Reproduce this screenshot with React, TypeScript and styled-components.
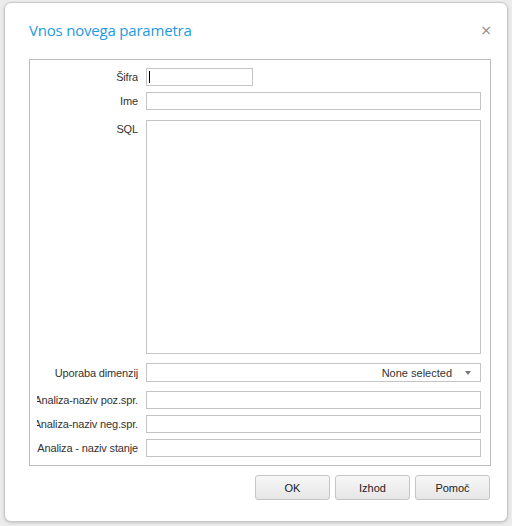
import React from "react";
import styled, { createGlobalStyle } from "styled-components";

const GlobalStyle = createGlobalStyle`
  html, body {
    margin: 0;
    padding: 0;
    background: #ececec;
  }
`;

const fields = [
  { label: "Uporaba dimenzij", select: true },
  { label: "Analiza-naziv poz.spr." },
  { label: "Analiza-naziv neg.spr." },
  { label: "Analiza - naziv stanje" },
];

const App = () => {
  return (
    <>
      <GlobalStyle />
      <Page>
        <Dialog>
          <Header>
            <Title>Vnos novega parametra</Title>
            <Close>×</Close>
          </Header>
          <Fieldset>
            <Row>
              <Label>Šifra</Label>
              <Field width="107px">
                <Caret />
              </Field>
            </Row>
            <Row>
              <Label>Ime</Label>
              <Field />
            </Row>
            <Row gapTop="10px">
              <Label top>SQL</Label>
              <Area />
            </Row>
            {fields.map((f, i) => (
              <Row key={f.label} gapTop={i < 2 ? "9px" : "6px"}>
                <Label>{f.label}</Label>
                {f.select ? (
                  <Select>
                    <span>None selected</span>
                    <Arrow />
                  </Select>
                ) : (
                  <Field />
                )}
              </Row>
            ))}
          </Fieldset>
          <Footer>
            <Button>OK</Button>
            <Button>Izhod</Button>
            <Button>Pomoč</Button>
          </Footer>
        </Dialog>
      </Page>
    </>
  );
};

export default App;

const Page = styled.div`
  width: 512px;
  height: 526px;
  padding: 2px 0 0 4px;
  box-sizing: border-box;
`;

const Dialog = styled.div`
  width: 504px;
  height: 520px;
  box-sizing: border-box;
  background: #fff;
  border: 1px solid #c9c9c9;
  border-radius: 7px;
  box-shadow: 0 1px 3px rgba(0, 0, 0, 0.18);
  padding: 0 16px 0 24px;
  display: flex;
  flex-direction: column;
`;

const Header = styled.div`
  height: 56px;
  display: flex;
  align-items: center;
  justify-content: space-between;
`;

const Title = styled.div`
  font-family: "Open Sans", "Noto Sans", sans-serif;
  font-size: 15px;
  letter-spacing: -0.2px;
  color: #1e9ae0;
  margin-top: -3px;
`;

const Close = styled.div`
  font-family: "DejaVu Sans", sans-serif;
  font-size: 14px;
  color: #8a8a8a;
  margin-right: -1px;
  margin-top: -3px;
`;

const Fieldset = styled.div`
  width: 462px;
  height: 407px;
  box-sizing: border-box;
  border: 1px solid #bdbdbd;
  padding: 8px 9px 0 7px;
  display: flex;
  flex-direction: column;
  gap: 6px;
`;

const Row = styled.div<{ gapTop?: string }>`
  display: flex;
  align-items: stretch;
  gap: 8px;
  margin-top: ${(p) => (p.gapTop ? `calc(${p.gapTop} - 6px)` : "0")};
`;

const Label = styled.div<{ top?: boolean }>`
  width: 101px;
  flex: none;
  overflow: hidden;
  white-space: nowrap;
  display: flex;
  justify-content: flex-end;
  align-items: ${(p) => (p.top ? "flex-start" : "center")};
  padding-top: ${(p) => (p.top ? "3px" : "0")};
  font-family: "Liberation Sans", sans-serif;
  font-size: 11px;
  letter-spacing: -0.15px;
  color: #333;
`;

const Field = styled.div<{ width?: string }>`
  width: ${(p) => p.width || "335px"};
  height: 18px;
  box-sizing: border-box;
  border: 1px solid #c4c4c4;
  background: #fff;
  display: flex;
  align-items: center;
  padding-left: 2px;
`;

const Caret = styled.div`
  width: 1px;
  height: 12px;
  background: #000;
`;

const Area = styled.div`
  width: 335px;
  height: 234px;
  box-sizing: border-box;
  border: 1px solid #c4c4c4;
`;

const Select = styled.div`
  width: 335px;
  height: 19px;
  box-sizing: border-box;
  border: 1px solid #c4c4c4;
  display: flex;
  align-items: center;
  justify-content: flex-end;
  gap: 13px;
  padding-right: 9px;
  font-family: "Liberation Sans", sans-serif;
  font-size: 11px;
  color: #333;
`;

const Arrow = styled.div`
  width: 0;
  height: 0;
  border-left: 3.5px solid transparent;
  border-right: 3.5px solid transparent;
  border-top: 4px solid #777;
  margin-top: 1px;
`;

const Footer = styled.div`
  width: 462px;
  display: flex;
  justify-content: flex-end;
  gap: 5px;
  padding: 9px 1px 0 0;
  box-sizing: border-box;
`;

const Button = styled.div`
  width: 75px;
  height: 25px;
  box-sizing: border-box;
  border: 1px solid #c6c6c6;
  border-radius: 3px;
  background: linear-gradient(#f7f7f7, #e6e6e6);
  display: flex;
  align-items: center;
  justify-content: center;
  font-family: "Liberation Sans", sans-serif;
  font-size: 11px;
  color: #222;
`;
